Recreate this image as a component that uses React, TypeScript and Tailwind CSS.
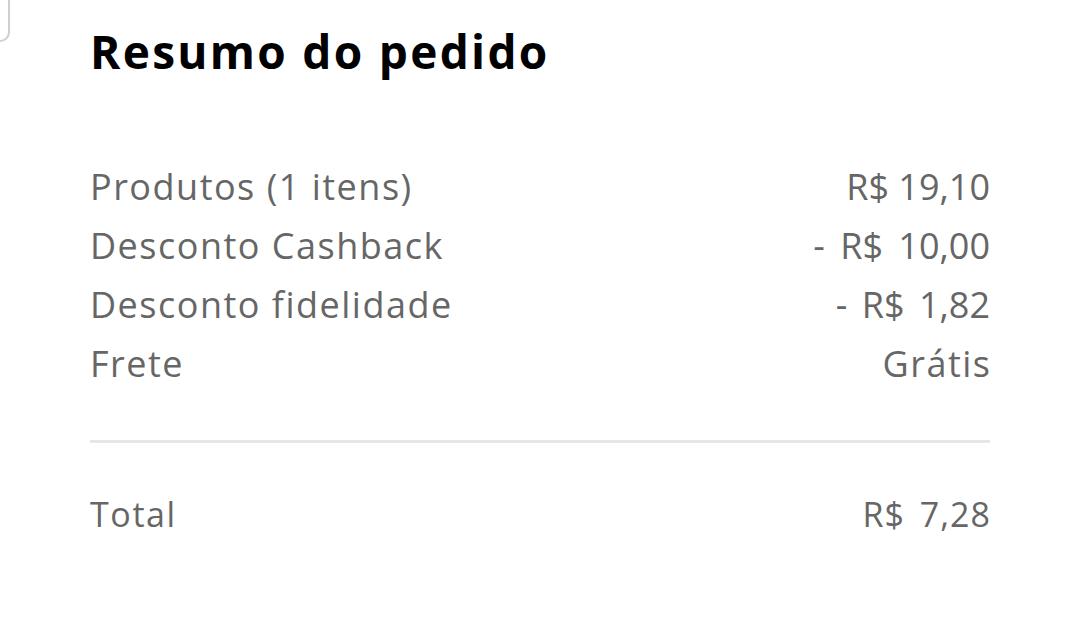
import React from "react";

const rows = [
  { label: "Produtos (1 itens)", value: "R$ 19,10", valueClass: "" },
  { label: "Desconto Cashback", value: "- R$ 10,00", valueClass: "[word-spacing:6px]" },
  { label: "Desconto fidelidade", value: "- R$ 1,82", valueClass: "[word-spacing:5px]" },
  { label: "Frete", value: "Grátis", valueClass: "tracking-[1.5px] -mr-[1.5px]" },
];

export default function App() {
  return (
    <div className="relative h-[628px] w-[1080px] overflow-hidden bg-white font-['Open_Sans',sans-serif]">
      {/* edge of the card above */}
      <div className="absolute -top-4 -left-4 h-[58px] w-[26px] rounded-br-[10px] border-r-2 border-b-2 border-[#cfcfcf]"></div>

      <div className="ml-[90px] w-[900px] pt-[23px]">
        <h1 className="text-[46px] leading-[56px] font-bold tracking-[2.3px] text-black">Resumo do pedido</h1>

        <div className="mt-[78px] flex flex-col">
          {rows.map((r) => (
            <div key={r.label} className="flex items-center justify-between text-[36px] leading-[59px] text-[#666666]">
              <span className="tracking-[1.5px]">{r.label}</span>
              <span className={r.valueClass}>{r.value}</span>
            </div>
          ))}
        </div>

        <div className="mt-[47px] h-[3px] bg-[#e6e6e6]"></div>

        <div className="mt-[47px] flex items-center justify-between text-[34px] leading-[48px] text-[#666666]">
          <span className="tracking-[1.6px]">Total</span>
          <span className="tracking-[1px] -mr-[1px] [word-spacing:5px]">R$ 7,28</span>
        </div>
      </div>
    </div>
  );
}
